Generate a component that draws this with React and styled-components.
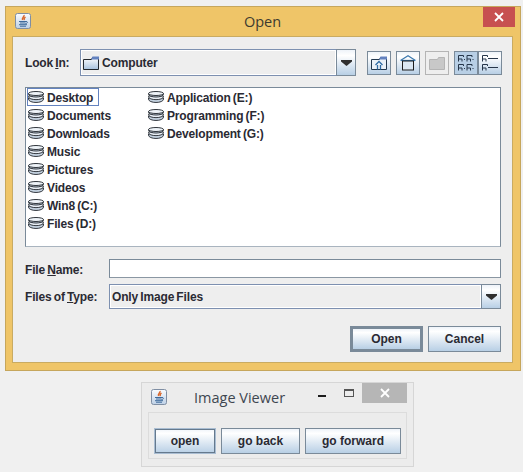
import React from "react";
import styled, { createGlobalStyle, css } from "styled-components";

const Global = createGlobalStyle`
  html, body { margin: 0; padding: 0; background: #f0f0f0; }
  * { box-sizing: border-box; }
  #root { width: 523px; height: 472px; overflow: hidden; }
`;

const tightText = css`
  word-spacing: -1px;
  letter-spacing: -0.15px;
`;

const Page = styled.div`
  display: flex;
  flex-direction: column;
  padding-top: 6px;
  font-family: "Liberation Sans", Arial, sans-serif;
  font-size: 12px;
  font-weight: 700;
  color: #2a2a33;
`;

const DialogFrame = styled.section`
  width: 516px;
  height: 365px;
  margin-left: 5px;
  border: 1px solid #c6a65c;
  background: #efc568;
  padding: 0 7px 7px 6px;
  display: flex;
  flex-direction: column;
`;

const TitleBar = styled.header`
  height: 29px;
  display: grid;
  grid-template-columns: 1fr auto 1fr;
  align-items: start;
`;

const AppIconSlot = styled.div`
  padding: 6px 0 0 3px;
  line-height: 0;
`;

const DialogTitle = styled.h1`
  margin: 0;
  padding-top: 7px;
  font: 400 14.5px/16px "Open Sans", sans-serif;
  color: #3d3a30;
`;

const CloseSlot = styled.div`
  display: flex;
  justify-content: flex-end;
  margin-right: -2px;
`;

const CloseButton = styled.div`
  width: 32px;
  height: 20px;
  background: #c75050;
  display: flex;
  align-items: center;
  justify-content: center;
  line-height: 0;
`;

const Body = styled.div`
  flex: 1;
  background: #eeeeee;
  border: 1px solid #c9ab62;
  padding: 12px 11px 0 12px;
  display: flex;
  flex-direction: column;
`;

const LookRow = styled.div`
  display: flex;
  align-items: center;
  height: 27px;
`;

const Label = styled.label`
  width: ${(p) => p.$w}px;
  flex: none;
  white-space: nowrap;
  line-height: 14px;
  padding-top: ${(p) => p.$drop || 0}px;
  ${tightText}
`;

const Combo = styled.div`
  width: ${(p) => p.$w}px;
  height: ${(p) => p.$h}px;
  flex: none;
  display: flex;
`;

const ComboField = styled.div`
  flex: 1;
  min-width: 0;
  border: 1px solid #7d90b0;
  box-shadow: inset 1px 1px 0 #fff, inset -1px -1px 0 #fff;
  background: #eeeeee;
  display: flex;
  align-items: center;
  gap: 3px;
  padding-left: ${(p) => p.$pad}px;
  white-space: nowrap;
  ${tightText}
`;

const ComboArrow = styled.div`
  width: 20px;
  flex: none;
  margin-left: -1px;
  border: 1px solid #7a8a99;
  background: linear-gradient(#eef3f9 0%, #ffffff 22%, #b8cfe5 100%);
  display: flex;
  align-items: center;
  justify-content: center;
  line-height: 0;
`;

const Tools = styled.div`
  display: flex;
  margin-left: 11px;
`;

const ToolButton = styled.div`
  width: 24px;
  height: 24px;
  margin-right: ${(p) => (p.$joined ? 0 : 5)}px;
  border: 1px solid ${(p) => (p.$off ? "#b4b4b4" : "#7a8a99")};
  background: ${(p) =>
    p.$off
      ? "#eeeeee"
      : p.$on
      ? "#b8cfe5"
      : "linear-gradient(#eef3f9 0%, #ffffff 22%, #b8cfe5 100%)"};
  display: flex;
  align-items: center;
  justify-content: center;
  line-height: 0;
`;

const FileList = styled.div`
  width: 476px;
  height: 160px;
  margin-top: 11px;
  flex: none;
  border: 1px solid #7a8a99;
  border-bottom-color: #a9b4bf;
  background: #fff;
  padding: 0 0 0 1px;
  display: grid;
  grid-auto-flow: column;
  grid-template-rows: repeat(8, 18px);
  grid-template-columns: 120px 120px;
  justify-content: start;
`;

const FileItem = styled.div`
  width: fit-content;
  height: 18px;
  display: flex;
  align-items: center;
  gap: 3px;
  padding: 0 5px 0 0;
  border: 1px solid ${(p) => (p.$sel ? "#6382bf" : "transparent")};
  white-space: nowrap;
  ${tightText}
`;

const ItemName = styled.span`
  line-height: 14px;
  padding-top: 2px;
`;

const NameRow = styled.div`
  display: flex;
  align-items: center;
  margin-top: 12px;
`;

const TypeRow = styled.div`
  display: flex;
  align-items: center;
  margin-top: 6px;
`;

const TextInput = styled.div`
  width: 392px;
  height: 19px;
  flex: none;
  background: #fff;
  border: 1px solid #7a8a99;
  border-bottom-color: #8a97a3;
`;

const ActionRow = styled.div`
  display: flex;
  justify-content: flex-end;
  gap: 5px;
  margin-top: 17px;
`;

const JButton = styled.div`
  width: ${(p) => p.$w}px;
  height: ${(p) => p.$h}px;
  flex: none;
  border: ${(p) => (p.$focus ? "3px solid #7a8a99" : p.$ring ? "1px solid #a9bdd2" : "1px solid #7a8a99")};
  box-shadow: ${(p) => (p.$ring ? "inset 0 0 0 1px #65798d" : "none")};
  background: linear-gradient(#eef3f9 0%, #ffffff 18%, #b8cfe5 100%);
  display: flex;
  align-items: center;
  justify-content: center;
  white-space: nowrap;
`;

const ViewerFrame = styled.section`
  width: 273px;
  height: 85px;
  margin: 11px 0 0 141px;
  border: 1px solid #d6d6d6;
  background: #ececec;
  padding: 0 6px;
`;

const ViewerBar = styled.header`
  height: 29px;
  display: flex;
  align-items: flex-start;
`;

const ViewerIconSlot = styled.div`
  padding: 6px 0 0 3px;
  line-height: 0;
`;

const ViewerTitle = styled.h2`
  margin: 0 0 0 27px;
  padding-top: 7px;
  width: 124px;
  font: 400 14.5px/16px "Open Sans", sans-serif;
  color: #3e4650;
  white-space: nowrap;
`;

const MinGlyph = styled.div`
  width: 8px;
  height: 2px;
  background: #1c1c1c;
  margin-top: 12px;
`;

const MaxGlyph = styled.div`
  width: 10px;
  height: 8px;
  margin: 6px 0 0 18px;
  border: 1px solid #555;
  border-top-width: 2px;
`;

const ViewerClose = styled.div`
  width: 45px;
  height: 20px;
  margin-left: 8px;
  background: #b6b6b6;
  display: flex;
  align-items: center;
  justify-content: center;
  line-height: 0;
`;

const ViewerPanel = styled.div`
  width: 259px;
  height: 47px;
  border: 1px solid #dcdcdc;
  padding: 15px 0 0 5px;
  display: flex;
  gap: 5px;
`;

const JavaIcon = ({ size = 16 }) => (
  <svg width={size} height={size} viewBox="0 0 16 16">
    <defs>
      <linearGradient id="jv" x1="0" y1="0" x2="0" y2="1">
        <stop offset="0" stopColor="#fafcff" />
        <stop offset="1" stopColor="#bdd0e6" />
      </linearGradient>
    </defs>
    <rect x=".5" y=".5" width="15" height="15" rx="2" fill="url(#jv)" stroke="#7f8ea3" />
    <path d="M9 2c.8 1.600-2.500 2.600-1.500 5M10.500 4c-1.200 1-2.200 1.500-1 3" fill="none" stroke="#d9662b" strokeWidth="1.400" />
    <path d="M4 8.500h7M5 10h5.500M4 11.700h8M5 13.200h6M11 8.500c2-.3 2 2-.5 2" fill="none" stroke="#3d6a9c" strokeWidth="1" />
  </svg>
);

const FolderIcon = () => (
  <svg width="16" height="14" viewBox="0 0 16 14">
    <defs>
      <linearGradient id="fd" x1="0" y1="0" x2="0" y2="1">
        <stop offset="0" stopColor="#ffffff" />
        <stop offset="1" stopColor="#a8c2de" />
      </linearGradient>
    </defs>
    <path d="M.5 13.500V3.500h8l1-2h6v12z" fill="url(#fd)" stroke="#23282e" />
    <path d="M9.500 0.500h6.500v3H8z" fill="#6382bf" />
  </svg>
);

const DriveIcon = () => (
  <svg width="16" height="12" viewBox="0 0 16 12" style={{ flex: "none" }}>
    <g fill="#c6d4e2" stroke="#33383f" strokeWidth="1">
      <path d="M.5 8c0 4.600 15 4.600 15 0V7H.5z" />
      <path d="M.5 5.500c0 4.200 15 4.200 15 0V5H.5z" fill="#e8eef5" />
      <path d="M.5 3c0 4 15 4 15 0V2.500H.5z" />
      <ellipse cx="8" cy="2.500" rx="7.500" ry="2" fill="#eef3f8" />
    </g>
  </svg>
);

const ArrowIcon = () => (
  <svg width="11" height="6" viewBox="0 0 11 6">
    <path d="M0 0h11v1.500L5.500 6 0 1.500z" fill="#2f2f2f" />
  </svg>
);

const CloseIcon = () => (
  <svg width="10" height="10" viewBox="0 0 10 10">
    <path d="M1 1l8 8M9 1l-8 8" stroke="#fff" strokeWidth="1.800" />
  </svg>
);

const UpFolderIcon = () => (
  <svg width="16" height="14" viewBox="0 0 16 14">
    <path d="M.5 13.500V3.500h8l1-2h6v12z" fill="#eaf1f8" stroke="#22384e" />
    <path d="M9.500 0.500h6.500v3H8z" fill="#6382bf" />
    <path d="M4.500 9L8 5.500 11.500 9M6.500 9v4.500M9.500 9v4.500" fill="none" stroke="#2f6ca5" strokeWidth="1.300" />
  </svg>
);

const HomeIcon = () => (
  <svg width="16" height="16" viewBox="0 0 16 16">
    <path d="M.5 5.500L8 .8l7.500 4.700" fill="none" stroke="#3a78ae" strokeWidth="1.200" />
    <path d="M1 5.500h14" stroke="#3a78ae" strokeWidth="1.200" />
    <rect x="2.500" y="6" width="11" height="9" fill="#dbe7f2" stroke="#1d1d1d" />
  </svg>
);

const NewFolderIcon = () => (
  <svg width="16" height="14" viewBox="0 0 16 14">
    <path d="M.5 13.500V3.500h8l1-2h6v12z" fill="#c8c8c8" stroke="#b4b4b4" />
  </svg>
);

const Tile = ({ x, y }) => (
  <path
    transform={`translate(${x} ${y})`}
    d="M.5 6.500V.5h5v1.500M.5 4h3.500v2.500"
    fill="none"
  />
);

const ListViewIcon = () => (
  <svg width="16" height="16" viewBox="0 0 16 16" stroke="#26364a">
    <Tile x={0} y={0} />
    <Tile x={8.500} y={0} />
    <Tile x={0} y={9} />
    <Tile x={8.500} y={9} />
    <path d="M6 4.500h1M14.500 4.500h1M6 13.500h1M14.500 13.500h1" />
  </svg>
);

const DetailViewIcon = () => (
  <svg width="16" height="16" viewBox="0 0 16 16" stroke="#26364a">
    <Tile x={0} y={0} />
    <Tile x={0} y={9} />
    <path d="M6 3.500h10M6 12.500h10" />
  </svg>
);

const column = [
  ["Desktop", true],
  ["Documents"],
  ["Downloads"],
  ["Music"],
  ["Pictures"],
  ["Videos"],
  ["Win8 (C:)"],
  ["Files (D:)"],
  ["Application (E:)"],
  ["Programming (F:)"],
  ["Development (G:)"],
];

export default function App() {
  return (
    <Page>
      <Global />
      <DialogFrame>
        <TitleBar>
          <AppIconSlot>
            <JavaIcon />
          </AppIconSlot>
          <DialogTitle>Open</DialogTitle>
          <CloseSlot>
            <CloseButton>
              <CloseIcon />
            </CloseButton>
          </CloseSlot>
        </TitleBar>
        <Body>
          <LookRow>
            <Label $w={55}>
              Look <u>I</u>n:
            </Label>
            <Combo $w={276} $h={27}>
              <ComboField $pad={2}>
                <FolderIcon />
                Computer
              </ComboField>
              <ComboArrow>
                <ArrowIcon />
              </ComboArrow>
            </Combo>
            <Tools>
              <ToolButton>
                <UpFolderIcon />
              </ToolButton>
              <ToolButton>
                <HomeIcon />
              </ToolButton>
              <ToolButton $off>
                <NewFolderIcon />
              </ToolButton>
              <ToolButton $on $joined>
                <ListViewIcon />
              </ToolButton>
              <ToolButton $joined>
                <DetailViewIcon />
              </ToolButton>
            </Tools>
          </LookRow>
          <FileList>
            {column.map(([name, sel]) => (
              <FileItem key={name} $sel={sel}>
                <DriveIcon />
                <ItemName>{name}</ItemName>
              </FileItem>
            ))}
          </FileList>
          <NameRow>
            <Label $w={84} $drop={2}>
              File <u>N</u>ame:
            </Label>
            <TextInput />
          </NameRow>
          <TypeRow>
            <Label $w={84} $drop={1}>
              Files of <u>T</u>ype:
            </Label>
            <Combo $w={392} $h={25}>
              <ComboField $pad={2}>Only Image Files</ComboField>
              <ComboArrow>
                <ArrowIcon />
              </ComboArrow>
            </Combo>
          </TypeRow>
          <ActionRow>
            <JButton $w={73} $h={26} $focus>
              Open
            </JButton>
            <JButton $w={73} $h={26}>
              Cancel
            </JButton>
          </ActionRow>
        </Body>
      </DialogFrame>
      <ViewerFrame>
        <ViewerBar>
          <ViewerIconSlot>
            <JavaIcon />
          </ViewerIconSlot>
          <ViewerTitle>Image Viewer</ViewerTitle>
          <MinGlyph />
          <MaxGlyph />
          <ViewerClose>
            <CloseIcon />
          </ViewerClose>
        </ViewerBar>
        <ViewerPanel>
          <JButton $w={62} $h={26} $ring>
            open
          </JButton>
          <JButton $w={79} $h={26}>
            go back
          </JButton>
          <JButton $w={96} $h={26}>
            go forward
          </JButton>
        </ViewerPanel>
      </ViewerFrame>
    </Page>
  );
}
